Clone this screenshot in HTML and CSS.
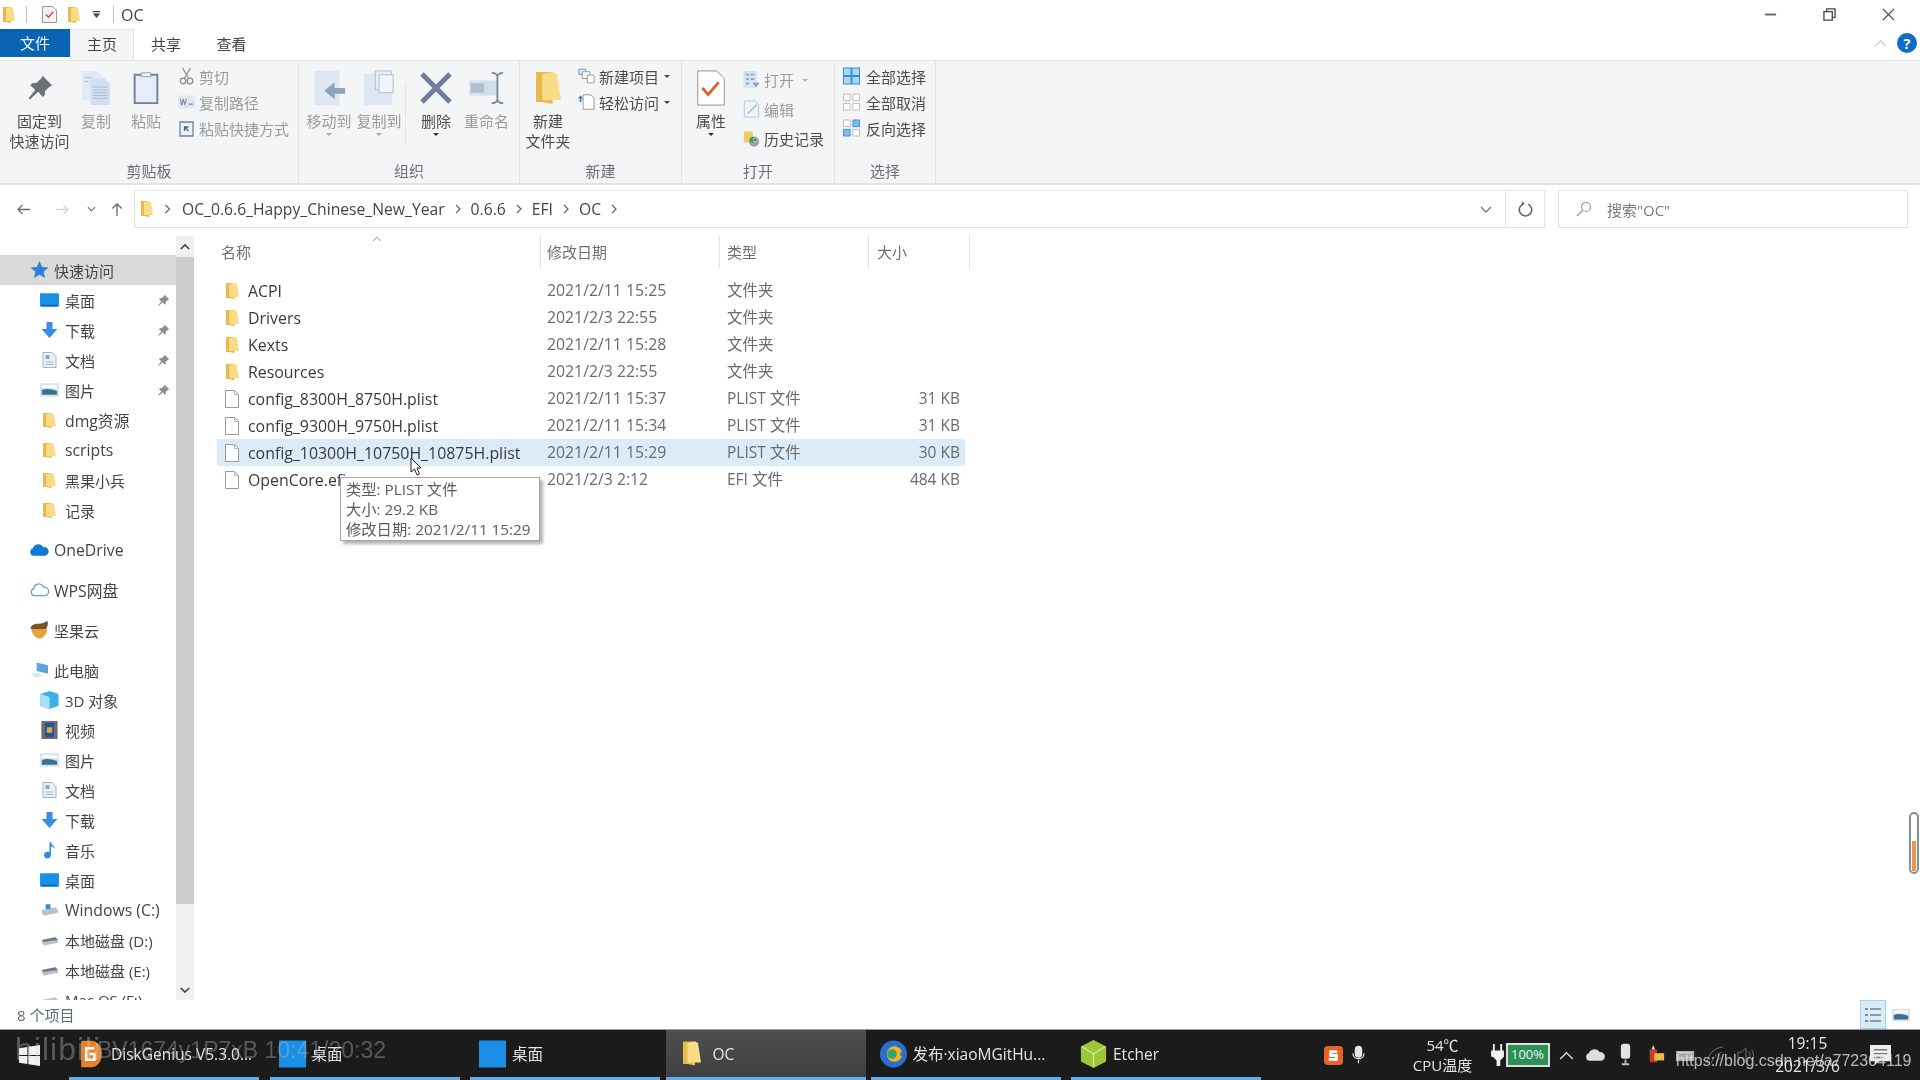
FILE: index.html
```html
<!DOCTYPE html>
<html lang="zh-CN">
<head>
<meta charset="utf-8">
<title>OC</title>
<link rel="stylesheet" href="styles.css">
</head>
<body>
<svg class="defs" width="0" height="0" aria-hidden="true">
  <symbol id="folder" viewBox="0 0 12 18" preserveAspectRatio="none"><path fill="#e9b84e" d="M0 1h8v16l-5-1H0z"/><path fill="#fbdc86" d="M3 2l5-1 2 1 2 13H3l0 3z"/></symbol>
  <symbol id="file" viewBox="0 0 16 20"><path fill="#fff" stroke="#9a9a9a" d="M1.5 1.5h9l4 4v13h-13z"/><path fill="none" stroke="#b5b5b5" d="M10.5 1.5v4h4"/></symbol>
  <symbol id="pin" viewBox="0 0 16 16"><path fill="currentColor" d="M9.5 1l5.5 5.5-1.4.6-2.6 2.4-.3 2.5-1.2 1.2-2.5-3L2.200 14.500 1.500 13.800 5.300 9 2.400 6.500l1.200-1.200 2.500-.3 2.700-2.600z"/></symbol>
  <symbol id="desk" viewBox="0 0 20 16"><rect width="20" height="14" y="1" rx="1" fill="#1a8fe8"/><rect x="2" y="13" width="16" height="1.500" fill="#0b5fa8"/></symbol>
  <symbol id="down" viewBox="0 0 18 18"><path fill="#3a8de0" d="M6 1h6v7h5l-8 9-8-9h5z"/></symbol>
  <symbol id="doc" viewBox="0 0 16 18"><path fill="#eef1f4" stroke="#a9b1bb" d="M1.500 1.500h9l4 4v11h-13z"/><path fill="#7fa7d6" d="M4 4h4v4H4z"/><path stroke="#aab4c0" d="M4 11h8M4 13.500h8"/></symbol>
  <symbol id="pic" viewBox="0 0 20 16"><rect y="1" width="20" height="14" fill="#d7e3ee"/><path fill="#3e6f8f" d="M2 8c5-2 10-1 16 1v4H2z"/><path fill="#fff" d="M2 3h16v3H2z"/></symbol>
  <symbol id="doc2" viewBox="0 0 32 38"><path fill="#e2eaf5" d="M1 1h16l7 7v24H1z"/><path fill="#d3deee" d="M10 9h15l6 6v22H10z"/><path stroke="#a9bbd2" d="M13 18h15M13 21h15M13 24h15M13 27h15M13 30h15M4 8h8M4 12h4"/></symbol>
  <symbol id="chev" viewBox="0 0 26 12"><path fill="none" stroke="#666" stroke-width="1.200" d="M11 2l4 4-4 4"/></symbol>
</svg>

<div class="page">
  <header class="titlebar">
    <svg class="ti t-f1"><use href="#folder"/></svg>
    <i class="tsep t-s1"></i>
    <svg class="ti t-chk" viewBox="0 0 16 18"><path fill="#f4f4f4" stroke="#8f8f8f" d="M.5.5h11l4 4v13H.5z"/><path fill="none" stroke="#cf4a3c" stroke-width="1.500" d="M4 9l3 3 5-6"/></svg>
    <svg class="ti t-f2"><use href="#folder"/></svg>
    <svg class="ti t-ar" viewBox="0 0 10 10"><path fill="#444" d="M1 1h8v1.500H1zM1 4h8L5 9z"/></svg>
    <i class="tsep t-s2"></i>
    <span class="t-name">OC</span>
    <div class="wctl">
      <svg viewBox="0 0 14 14"><path stroke="#666" stroke-width="2" d="M1 7h12"/></svg>
      <svg viewBox="0 0 14 14"><path fill="none" stroke="#444" stroke-width="1.400" d="M1 4h9v9H1zM4 4V1h9v9h-3"/></svg>
      <svg viewBox="0 0 14 14"><path stroke="#444" stroke-width="1.300" d="M1 1l12 12M13 1L1 13"/></svg>
    </div>
  </header>

  <nav class="tabs">
    <span class="tab tab-file">文件</span>
    <span class="tab tab-on">主页</span>
    <span class="tab">共享</span>
    <span class="tab">查看</span>
    <div class="tabs-right">
      <svg class="caret" viewBox="0 0 14 8"><path fill="none" stroke="#c4c4c4" stroke-width="1.300" d="M1 7l6-6 6 6"/></svg>
      <span class="help">?</span>
    </div>
  </nav>

  <section class="ribbon">
    <div class="group g-clip">
      <div class="gbody">
        <div class="big w-pin dark"><svg class="bi" viewBox="0 0 36 36"><use href="#pin" width="28" height="28" x="4" y="4" color="#6d7279"/></svg><span>固定到<br>快速访问</span></div>
        <div class="big w-copy off"><svg class="bi" viewBox="0 0 32 38"><use href="#doc2"/></svg><span>复制</span></div>
        <div class="big w-paste off"><svg class="bi" viewBox="0 0 30 38"><path fill="#e6edf6" stroke="#6f8299" stroke-width="2" d="M3 5h24v30H3z"/><path fill="#f6f8fb" stroke="#8a9aae" d="M10 3h10v4H10z"/></svg><span>粘贴</span></div>
        <div class="scol s-clip off">
          <div class="srow"><svg viewBox="0 0 16 18"><path fill="none" stroke="#8f8f8f" stroke-width="1.300" d="M4 1l6 10M12 1L6 11"/><circle cx="4.500" cy="14" r="2.800" fill="none" stroke="#8f8f8f" stroke-width="1.300"/><circle cx="11.500" cy="14" r="2.800" fill="none" stroke="#8f8f8f" stroke-width="1.300"/></svg><span>剪切</span></div>
          <div class="srow"><svg viewBox="0 0 16 14"><rect y="1" width="16" height="12" fill="#e0e7f0"/><path fill="none" stroke="#7a8ca3" d="M2 4l1.500 6L5 4l1.500 6L8 4M10 9h4"/></svg><span>复制路径</span></div>
          <div class="srow"><svg viewBox="0 0 16 18"><path fill="#eef2f8" stroke="#6f8299" stroke-width="1.300" d="M1.500 3h13v14h-13z"/><path fill="none" stroke="#3d5f8c" stroke-width="1.300" d="M6 12V8h4M6 8l4 4"/></svg><span>粘贴快捷方式</span></div>
        </div>
      </div>
      <div class="glabel">剪贴板</div>
    </div>

    <div class="group g-org">
      <div class="gbody">
        <div class="big w-move off"><svg class="bi" viewBox="0 0 34 38"><path fill="#dfe7f2" d="M2 1h26v36H2z"/><path fill="#8ea3bd" d="M34 19H23v-6L12 22l11 9v-6h11z"/></svg><span>移动到</span><i class="mini"></i></div>
        <div class="big w-move off"><svg class="bi" viewBox="0 0 34 38"><path fill="#dfe7f2" d="M1 4h30v33H1z"/><path fill="#e8eef6" stroke="#a9bbd2" d="M13 1h17v20H13z"/><path fill="#f2f5fa" stroke="#a9bbd2" d="M17 5h15v19H17z"/></svg><span>复制到</span><i class="mini"></i></div>
        <i class="vsep"></i>
        <div class="big w-del dark"><svg class="bi" viewBox="0 0 36 36"><path stroke="#6e7f9f" stroke-width="5" d="M4 4l28 28M32 4L4 32"/></svg><span>删除</span><i class="mini mini-d"></i></div>
        <div class="big w-ren off"><svg class="bi" viewBox="0 0 38 36"><rect x="0" y="10" width="30" height="16" fill="#d4dfed"/><rect x="2" y="13" width="14" height="10" fill="#aebfd4"/><path fill="none" stroke="#7c8796" stroke-width="2" d="M24 2c3 0 5 1 6 3 1-2 3-3 6-3M30 5v26M24 34c3 0 5-1 6-3 1 2 3 3 6 3"/></svg><span>重命名</span></div>
      </div>
      <div class="glabel">组织</div>
    </div>

    <div class="group g-new">
      <div class="gbody">
        <div class="big w-newf dark"><svg class="bi folder-b"><use href="#folder"/></svg><span>新建<br>文件夹</span></div>
        <div class="scol s-new dark">
          <div class="srow"><svg viewBox="0 0 20 18"><path fill="#e6f0fa" stroke="#4a88c8" d="M1 1h8v6H1z"/><path fill="#fff" stroke="#8c8c8c" d="M5 4h9v8H5z"/><path fill="#fff" stroke="#8c8c8c" d="M11 8h8v9h-8z"/></svg><span>新建项目</span><b class="tri"></b></div>
          <div class="srow"><svg viewBox="0 0 20 20"><path fill="#fff" stroke="#8c8c8c" d="M6 1.500h9l4 4v13H6z"/><path fill="#3f7fc0" d="M0 6l3-4 3 4H4v4H2V6z"/></svg><span>轻松访问</span><b class="tri"></b></div>
        </div>
      </div>
      <div class="glabel">新建</div>
    </div>

    <div class="group g-open">
      <div class="gbody">
        <div class="big w-prop dark"><svg class="bi" viewBox="0 0 30 38"><path fill="#fff" stroke="#8f8f8f" d="M1 1h20l8 8v28H1z"/><path fill="none" stroke="#d9622b" stroke-width="3" d="M6 19l6 7 11-13"/></svg><span>属性</span><i class="mini mini-d"></i></div>
        <div class="scol s-open">
          <div class="srow off"><svg viewBox="0 0 18 20"><rect width="15" height="19" fill="#d9e3ef"/><path stroke="#8ca0b8" stroke-width="2" d="M3 4h3M3 9h3M3 14h3M8 4h4M8 9h4"/><path fill="#8ca0b8" d="M10 13h8l-4 5z"/></svg><span>打开</span><b class="tri tri-l"></b></div>
          <div class="srow off"><svg viewBox="0 0 18 20"><path fill="#eef3f9" stroke="#b4c4d8" d="M1 1h12l4 4v14H1z"/><path stroke="#a6b8cf" stroke-width="1.500" d="M5 15L15 5"/></svg><span>编辑</span></div>
          <div class="srow dark"><svg viewBox="0 0 20 20"><path fill="#f3cb63" d="M1 1h8l3 2v11H1z"/><circle cx="13" cy="13" r="6" fill="#9aa3ad"/><circle cx="11" cy="11" r="3.500" fill="#3fa55a"/><path stroke="#fff" d="M13 9v4h3"/></svg><span>历史记录</span></div>
        </div>
      </div>
      <div class="glabel">打开</div>
    </div>

    <div class="group g-sel">
      <div class="gbody">
        <div class="scol s-sel dark">
          <div class="srow"><svg viewBox="0 0 18 18"><rect width="18" height="18" fill="#2f8fd8"/><path fill="#a9d6f5" d="M1 1h7v7H1zM10 1h7v7h-7zM1 10h7v7H1zM10 10h7v7h-7z"/></svg><span>全部选择</span></div>
          <div class="srow"><svg viewBox="0 0 18 18"><path fill="#fff" stroke="#b9b9b9" d="M.5.5h7v7h-7zM10.500.5h7v7h-7zM.5 10.500h7v7h-7zM10.500 10.500h7v7h-7z"/></svg><span>全部取消</span></div>
          <div class="srow"><svg viewBox="0 0 18 18"><path fill="#fff" stroke="#b9b9b9" d="M.5.5h7v7h-7zM10.500 10.500h7v7h-7z"/><path fill="#7fbce8" stroke="#2f8fd8" d="M10.500.5h7v7h-7zM.5 10.500h7v7h-7z"/></svg><span>反向选择</span></div>
        </div>
      </div>
      <div class="glabel">选择</div>
    </div>
  </section>

  <section class="addr">
    <div class="navbtns">
      <svg class="n-back" viewBox="0 0 16 12"><path fill="none" stroke="#6a6a6a" stroke-width="1.400" d="M15 6H2M7 1L2 6l5 5"/></svg>
      <svg class="n-fwd" viewBox="0 0 16 12"><path fill="none" stroke="#d0d0d0" stroke-width="1.400" d="M1 6h13M9 1l5 5-5 5"/></svg>
      <svg class="n-dd" viewBox="0 0 10 6"><path fill="none" stroke="#777" stroke-width="1.300" d="M1 1l4 4 4-4"/></svg>
      <svg class="n-up" viewBox="0 0 12 16"><path fill="none" stroke="#666" stroke-width="1.400" d="M6 15V2M1 7l5-5 5 5"/></svg>
    </div>
    <div class="crumbs">
      <svg class="c-folder"><use href="#folder"/></svg>
      <svg class="gt gt-1"><use href="#chev"/></svg>
      <span>OC_0.6.6_Happy_Chinese_New_Year</span><svg class="gt"><use href="#chev"/></svg>
      <span>0.6.6</span><svg class="gt"><use href="#chev"/></svg>
      <span>EFI</span><svg class="gt"><use href="#chev"/></svg>
      <span>OC</span><svg class="gt"><use href="#chev"/></svg>
      <svg class="c-dd" viewBox="0 0 12 7"><path fill="none" stroke="#777" stroke-width="1.300" d="M1 1l5 5 5-5"/></svg>
      <div class="c-ref"><svg viewBox="0 0 16 18"><path fill="none" stroke="#666" stroke-width="1.800" d="M5 3.500a7 7 0 1 0 6 0"/><path fill="#666" d="M4 0v6l3-3z"/></svg></div>
    </div>
    <div class="search">
      <svg viewBox="0 0 16 16"><circle cx="10" cy="6" r="4.500" fill="none" stroke="#9a9a9a" stroke-width="1.200"/><path stroke="#9a9a9a" stroke-width="1.200" d="M6.500 9.500L1 15"/></svg>
      <span>搜索"OC"</span>
    </div>
  </section>

  <main class="main">
    <aside class="nav">
      <div class="nrow l1 sel"><svg viewBox="0 0 16 16"><path fill="#2a82dc" d="M8 0l2.300 5.300 5.700.5-4.300 3.700 1.300 5.600L8 12.200l-5 2.900 1.300-5.600L0 5.800l5.700-.5z"/></svg><span>快速访问</span></div>
      <div class="nrow l2"><svg><use href="#desk"/></svg><span>桌面</span><svg class="p"><use href="#pin"/></svg></div>
      <div class="nrow l2"><svg><use href="#down"/></svg><span>下载</span><svg class="p"><use href="#pin"/></svg></div>
      <div class="nrow l2"><svg><use href="#doc"/></svg><span>文档</span><svg class="p"><use href="#pin"/></svg></div>
      <div class="nrow l2"><svg><use href="#pic"/></svg><span>图片</span><svg class="p"><use href="#pin"/></svg></div>
      <div class="nrow l2 f lat"><svg><use href="#folder"/></svg><span>dmg资源</span></div>
      <div class="nrow l2 f lat"><svg><use href="#folder"/></svg><span>scripts</span></div>
      <div class="nrow l2 f"><svg><use href="#folder"/></svg><span>黑果小兵</span></div>
      <div class="nrow l2 f"><svg><use href="#folder"/></svg><span>记录</span></div>
      <div class="nrow l1 gap lat"><svg viewBox="0 0 20 14"><path fill="#0f78d4" d="M4 13a4 4 0 0 1-1-7.800A6 6 0 0 1 14 4a4.500 4.500 0 0 1 2 9z"/></svg><span>OneDrive</span></div>
      <div class="nrow l1 gap lat"><svg viewBox="0 0 20 16"><path fill="#fff" stroke="#5b9ae0" stroke-width="1.300" d="M5 14a3.800 3.800 0 0 1-1-7.400A5.500 5.500 0 0 1 14.500 5 4.500 4.500 0 0 1 15.500 14z"/></svg><span>WPS网盘</span></div>
      <div class="nrow l1 gap"><svg viewBox="0 0 20 20"><path fill="#e8a13f" d="M1 8h17c1 6-4 11.500-8 11.500S1 14 1 8z"/><path fill="#7a5228" d="M0 9c0-4 4-6 9-6 4 0 8-2 10-3 1 5-1 9-3 9z"/></svg><span>坚果云</span></div>
      <div class="nrow l1 gap"><svg viewBox="0 0 20 18"><path fill="#5aa6e0" d="M7 1l12 3v9L7 10z"/><path fill="#dfe5ea" d="M1 13l8-1 5 3-8 2z"/></svg><span>此电脑</span></div>
      <div class="nrow l2"><svg viewBox="0 0 18 18"><path fill="#3ab4e6" d="M9 0l9 3v12l-9 3-9-3V3z"/><path fill="#a8e2f7" d="M0 3l9 3v12l-9-3z"/></svg><span>3D 对象</span></div>
      <div class="nrow l2"><svg viewBox="0 0 18 20"><rect width="18" height="20" fill="#6b7078"/><rect x="4" y="2" width="10" height="16" fill="#2e4f8f"/><path fill="#d8b04a" d="M6 7h6v6H6z"/></svg><span>视频</span></div>
      <div class="nrow l2"><svg><use href="#pic"/></svg><span>图片</span></div>
      <div class="nrow l2"><svg><use href="#doc"/></svg><span>文档</span></div>
      <div class="nrow l2"><svg><use href="#down"/></svg><span>下载</span></div>
      <div class="nrow l2"><svg viewBox="0 0 14 18"><path fill="#2a8fe0" d="M7 1h1.500c0 3 4 4 4 7-1-1.500-2.500-2.500-4-2.500V14a3.500 3.500 0 1 1-1.500-2.800z"/></svg><span>音乐</span></div>
      <div class="nrow l2"><svg><use href="#desk"/></svg><span>桌面</span></div>
      <div class="nrow l2 lat"><svg viewBox="0 0 20 16"><path fill="#b9c3cc" d="M2 8l14-3 3 3v3l-15 3-2-3z"/><path fill="#2e8ad8" d="M6 2h5v5H6z"/></svg><span>Windows (C:)</span></div>
      <div class="nrow l2"><svg viewBox="0 0 20 16"><path fill="#b9c3cc" d="M2 8l14-3 3 3v3l-15 3-2-3z"/><path fill="#6f7a84" d="M2 8l14-3 3 3-15 2z"/></svg><span>本地磁盘 (D:)</span></div>
      <div class="nrow l2"><svg viewBox="0 0 20 16"><path fill="#b9c3cc" d="M2 8l14-3 3 3v3l-15 3-2-3z"/><path fill="#6f7a84" d="M2 8l14-3 3 3-15 2z"/></svg><span>本地磁盘 (E:)</span></div>
      <div class="nrow l2"><svg viewBox="0 0 20 16"><path fill="#b9c3cc" d="M2 8l14-3 3 3v3l-15 3-2-3z"/></svg><span>Mac OS (F:)</span></div>
    </aside>

    <div class="sbar">
      <svg class="sb-up" viewBox="0 0 12 8"><path fill="none" stroke="#444" stroke-width="2" d="M1 7l5-5 5 5"/></svg>
      <i class="sb-thumb"></i>
      <svg class="sb-dn" viewBox="0 0 12 8"><path fill="none" stroke="#444" stroke-width="2" d="M1 1l5 5 5-5"/></svg>
    </div>

    <div class="files">
      <div class="fhead">
        <div class="hc">名称<svg class="sort" viewBox="0 0 10 6"><path fill="none" stroke="#a0a0a0" d="M1 5l4-4 4 4"/></svg></div>
        <div class="hc">修改日期</div>
        <div class="hc">类型</div>
        <div class="hc">大小</div>
      </div>
      <div class="frow"><div class="nm"><svg class="ff"><use href="#folder"/></svg>ACPI</div><div class="dt">2021/2/11 15:25</div><div>文件夹</div><div></div></div>
      <div class="frow"><div class="nm"><svg class="ff"><use href="#folder"/></svg>Drivers</div><div class="dt">2021/2/3 22:55</div><div>文件夹</div><div></div></div>
      <div class="frow"><div class="nm"><svg class="ff"><use href="#folder"/></svg>Kexts</div><div class="dt">2021/2/11 15:28</div><div>文件夹</div><div></div></div>
      <div class="frow"><div class="nm"><svg class="ff"><use href="#folder"/></svg>Resources</div><div class="dt">2021/2/3 22:55</div><div>文件夹</div><div></div></div>
      <div class="frow"><div class="nm"><svg class="fd"><use href="#file"/></svg>config_8300H_8750H.plist</div><div class="dt">2021/2/11 15:37</div><div>PLIST 文件</div><div class="sz">31 KB</div></div>
      <div class="frow"><div class="nm"><svg class="fd"><use href="#file"/></svg>config_9300H_9750H.plist</div><div class="dt">2021/2/11 15:34</div><div>PLIST 文件</div><div class="sz">31 KB</div></div>
      <div class="frow hot"><div class="nm"><svg class="fd"><use href="#file"/></svg>config_10300H_10750H_10875H.plist</div><div class="dt">2021/2/11 15:29</div><div>PLIST 文件</div><div class="sz">30 KB</div></div>
      <div class="frow"><div class="nm"><svg class="fd"><use href="#file"/></svg>OpenCore.efi</div><div class="dt">2021/2/3 2:12</div><div>EFI 文件</div><div class="sz">484 KB</div></div>
    </div>
  </main>

  <footer class="status">
    <span>8 个项目</span>
    <div class="views">
      <div class="v-on"><svg viewBox="0 0 18 18"><path stroke="#7d8791" stroke-width="2" d="M1 3h3M1 9h3M1 15h3"/><path stroke="#8d99a5" stroke-width="2" d="M6 3h11M6 9h11M6 15h11"/></svg></div>
      <svg class="v-pic"><use href="#pic"/></svg>
    </div>
  </footer>

  <div class="taskbar">
    <div class="start"><svg viewBox="0 0 20 20"><path fill="#f2f2f2" d="M0 3l8-1.200V9.500H0zM9 1.600L20 0v9.500H9zM0 10.500h8v7.700L0 17zM9 10.500h11V20L9 18.400z"/></svg></div>
    <div class="task"><svg viewBox="0 0 27 34"><path fill="#e8812a" d="M1 1h12c8 0 13 7 13 16s-5 16-13 16H1z"/><path fill="none" stroke="#fff" stroke-width="3" d="M17 10H7v14h10v-7h-6"/></svg><span>DiskGenius V5.3.0...</span></div>
    <div class="task"><svg viewBox="0 0 27 27"><rect width="27" height="27" fill="#1a8fe8"/></svg><span>桌面</span></div>
    <div class="task"><svg viewBox="0 0 27 27"><rect width="27" height="27" fill="#1a8fe8"/></svg><span>桌面</span></div>
    <div class="task on"><svg class="tf"><use href="#folder"/></svg><span>OC</span></div>
    <div class="task"><svg viewBox="0 0 28 28"><circle cx="14" cy="14" r="14" fill="#2a6fd0"/><circle cx="15" cy="14" r="8" fill="#f5b51e"/><circle cx="12.500" cy="14" r="5" fill="#35a46a"/><path fill="#2a6fd0" d="M28 14l-7-2v4z"/></svg><span>发布·xiaoMGitHu...</span></div>
    <div class="task"><svg viewBox="0 0 27 30"><path fill="#9cc73a" d="M13.500 0L27 7v16l-13.500 7L0 23V7z"/><path fill="none" stroke="#d5e88a" stroke-width="1.500" d="M1 7l12.500 8L26 7M13.500 15v14"/></svg><span>Etcher</span></div>
    <div class="tray">
      <svg class="y-s" viewBox="0 0 20 20"><rect width="20" height="20" rx="4" fill="#e8622a"/><path fill="none" stroke="#fff" stroke-width="3" d="M14 6H7v4h6v4H5"/></svg>
      <svg class="y-mic" viewBox="0 0 14 20"><rect x="3" width="8" height="13" rx="4" fill="#e6e6e6"/><path fill="none" stroke="#e6e6e6" stroke-width="1.300" d="M1 8c0 8 12 8 12 0M7 15v4"/></svg>
      <i></i>
      <div class="temp"><span>54℃</span><span>CPU温度</span></div>
      <i></i>
      <svg class="y-plug" viewBox="0 0 14 24"><path fill="#f2f2f2" d="M2 0h2v7h6V0h2v7h2v7l-4 4v6H6v-6l-4-4H0V7h2z"/></svg>
      <div class="batt"><span>100%</span></div>
      <svg class="y-car" viewBox="0 0 16 10"><path fill="none" stroke="#ddd" stroke-width="1.500" d="M1 9l7-7 7 7"/></svg>
      <svg class="y-cl" viewBox="0 0 22 14"><path fill="#dedede" d="M5 13a4 4 0 0 1-1-7.800A6.500 6.500 0 0 1 15.500 4 4.500 4.500 0 0 1 17 13z"/></svg>
      <svg class="y-m2" viewBox="0 0 14 24"><rect x="2" width="10" height="16" rx="3" fill="#e2e2e2"/><path stroke="#bbb" stroke-width="2" d="M7 17v4M3 22h8"/></svg>
      <svg class="y-qq" viewBox="0 0 20 24"><path fill="#c73a2a" d="M3 6h8v14H3z"/><path fill="#f0b848" d="M8 10h11v8H8z"/><path fill="#d8d8d8" d="M7 1l2 5h-4z"/></svg>
      <svg class="y-net" viewBox="0 0 22 16"><rect y="3" width="20" height="11" fill="#aaa"/><path stroke="#eee" d="M2 5h16"/></svg>
      <svg class="y-wifi" viewBox="0 0 22 20"><path fill="none" stroke="#777" d="M1 19C2 9 9 2 19 1M6 19c1-6 5-10 11-12M11 19c1-3 3-5 6-6"/></svg>
      <svg class="y-sp" viewBox="0 0 22 20"><path fill="none" stroke="#777" d="M2 7h4l5-5v16l-5-5H2zM14 6c2 2 2 6 0 8M17 4c3 3 3 9 0 12"/></svg>
      <div class="clock"><span>19:15</span><span>2021/3/6</span></div>
      <i></i>
      <svg class="y-note" viewBox="0 0 22 22"><path fill="#eee" d="M0 0h22v17H9l-4 4v-4H0z"/><path stroke="#777" stroke-width="1.500" d="M4 5h14M4 9h14M4 13h10"/></svg>
    </div>
  </div>

  <!-- overlays -->
  <div class="tooltip"><div>类型: PLIST 文件</div><div>大小: 29.2 KB</div><div>修改日期: 2021/2/11 15:29</div></div>
  <svg class="cursor" viewBox="0 0 12 19"><path fill="#fff" stroke="#222" d="M1 1v14l3.500-3 2.500 6 2.500-1-2.500-6H11z"/></svg>
  <div class="thermo"><i></i></div>
  <div class="wm-logo">bilibili</div>
  <div class="wm-bv">BV1674y1P7xB 10:41/20:32</div>
  <div class="wm-url">https://blog.csdn.net/a772304119</div>
</div>
</body>
</html>
```

FILE: styles.css
```css
* { box-sizing: border-box; }
html, body { margin: 0; padding: 0; }
body { width: 1920px; height: 1080px; overflow: hidden; background: #fff; }
.defs { position: absolute; }
i { font-style: normal; }
b { font-weight: normal; }

.page {
  position: relative;
  width: 1920px;
  height: 1080px;
  display: flex;
  flex-direction: column;
  overflow: hidden;
  font-family: "Open Sans", "Noto Sans CJK SC", sans-serif;
  font-size: 15px;
  color: #444;
  filter: blur(0.55px);
}

/* title bar */
.titlebar { height: 29px; display: flex; align-items: center; flex: none; }
.ti { display: block; flex: none; }
.t-f1 { width: 12px; height: 18px; margin-left: 3px; }
.tsep { display: block; width: 1px; height: 17px; background: #bdbdbd; flex: none; }
.t-s1 { margin-left: 11px; }
.t-chk { width: 15px; height: 17px; margin-left: 15px; }
.t-f2 { width: 12px; height: 18px; margin-left: 11px; }
.t-ar { width: 9px; height: 9px; margin-left: 12px; }
.t-s2 { margin-left: 12px; }
.t-name { margin-left: 7px; font-size: 16px; color: #444; }
.wctl { margin-left: auto; display: flex; gap: 46px; padding-right: 25px; }
.wctl svg { width: 13px; height: 13px; display: block; }

/* tabs */
.tabs { height: 31px; display: flex; flex: none; position: relative; }
.tab { width: 64px; height: 31px; line-height: 30px; text-align: center; color: #444; margin-right: 1.500px; }
.tab-file { width: 70px; height: 28px; line-height: 29px; background: #0a62b2; color: #f2f6fa; margin-right: 0; }
.tab-on { background: #f4f5f6; border: 1px solid #e4e5e6; border-bottom: 0; line-height: 29px; margin-right: 0; }
.tabs-right { margin-left: auto; display: flex; align-items: center; padding: 0 3px 3px 0; gap: 10px; }
.caret { width: 13px; height: 7px; }
.help { width: 20px; height: 20px; border-radius: 50%; background: #0f6cc4; color: #fff; text-align: center; line-height: 20px; font-size: 15px; font-weight: 700; }

/* ribbon */
.ribbon { height: 125px; flex: none; display: flex; background: #f4f5f6; border-top: 1px solid #e3e4e5; border-bottom: 2px solid #e1e2e3; }
.group { display: flex; flex-direction: column; border-right: 1px solid #e4e5e6; padding-top: 9px; }
.g-clip { width: 299px; }
.g-org { width: 221px; }
.g-new { width: 162px; }
.g-open { width: 153px; }
.g-sel { width: 101px; }
.g-org .gbody { padding-left: 5px; }
.g-sel .gbody { padding-left: 8px; }
.gbody { flex: 1; display: flex; min-height: 0; }
.glabel { height: 23px; line-height: 22px; text-align: center; color: #6b6f73; font-size: 15px; }
.big { display: flex; flex-direction: column; align-items: center; text-align: center; line-height: 20px; flex: none; }
.big span { display: block; margin-top: 5px; white-space: nowrap; }
.bi { width: 36px; height: 36px; display: block; flex: none; }
.folder-b { width: 25px; }
.dark { color: #4c4c4c; }
.off { color: #9b9b9b; }
.w-pin { width: 71px; margin-left: 4px; }
.w-copy { width: 42px; }
.w-paste { width: 58px; }
.w-move { width: 50px; }
.w-del { width: 56px; margin-left: 2px; }
.w-ren { width: 45px; }
.w-newf { width: 56px; }
.w-prop { width: 58px; }
.vsep { display: block; width: 1px; height: 60px; margin: 14px 0 0 1px; background: #e4e5e6; flex: none; }
.mini { display: block; width: 0; height: 0; border: 3px solid transparent; border-top-color: #aaa; margin-top: 2px; }
.mini-d { border-top-color: #333; }
.scol { display: flex; flex-direction: column; }
.srow { height: 26px; display: flex; align-items: center; white-space: nowrap; }
.srow svg { width: 17px; height: 18px; flex: none; margin-right: 4px; }
.s-clip { margin-left: 3px; margin-top: -7px; }
.s-new { margin-left: 2px; margin-top: -7px; }
.s-open { margin-left: 3px; margin-top: -5px; }
.s-open .srow { height: 29.500px; }
.s-sel { margin-top: -7px; }
.s-sel .srow svg { margin-right: 6px; }
.tri { display: block; width: 0; height: 0; border: 3.500px solid transparent; border-top-color: #444; margin: 4px 0 0 5px; }
.tri-l { border-top-color: #b5b5b5; margin-left: 8px; }

/* address */
.addr { height: 38px; margin-top: 5px; flex: none; display: flex; }
.navbtns { width: 134px; display: flex; align-items: center; flex: none; }
.navbtns svg { display: block; flex: none; }
.n-back { width: 15px; height: 11px; margin-left: 16px; }
.n-fwd { width: 15px; height: 11px; margin-left: 24px; opacity: .9; }
.n-dd { width: 9px; height: 6px; margin-left: 17px; }
.n-up { width: 12px; height: 15px; margin-left: 15px; }
.crumbs { width: 1411px; flex: none; display: flex; align-items: center; border: 1px solid #e2e2e2; padding-left: 6px; color: #444; font-size: 15.700px; }
.c-folder { width: 12px; height: 18px; flex: none; }
.gt { width: 26px; height: 12px; flex: none; }
.gt-1 { width: 29px; }
.c-dd { width: 12px; height: 7px; margin-left: auto; margin-right: 13px; }
.c-ref { width: 39px; height: 36px; border-left: 1px solid #e2e2e2; display: flex; align-items: center; justify-content: center; }
.c-ref svg { width: 15px; height: 16px; }
.search { width: 350px; margin-left: 13px; flex: none; border: 1px solid #e2e2e2; display: flex; align-items: center; padding-left: 17px; color: #7a7a7a; }
.search svg { width: 16px; height: 16px; margin-right: 15px; }

/* main */
.main { flex: 1; min-height: 0; display: flex; }
.nav { width: 176px; flex: none; padding-top: 27px; overflow: hidden; }
.nrow { height: 30px; display: flex; align-items: center; white-space: nowrap; position: relative; color: #444; }
.nrow > svg:first-child { width: 19px; height: 18px; margin-right: 6px; flex: none; display: block; }
.l1 { padding-left: 30px; }
.l1 > svg:first-child { margin-right: 5px !important; }
.l2 { padding-left: 40px; }
.lat { font-size: 15.800px; }
.gap { margin-top: 10px; }
.gap + .l2 { margin-top: 0; }
.sel { background: #d9d9d9; }
.f > svg:first-child { width: 13px; height: 17px; margin-left: 3px; margin-right: 9px; }
.p { width: 13px; height: 13px; margin-left: auto; margin-right: 6px; color: #8e8e8e; flex: none; }
.sbar { width: 18px; flex: none; margin-top: 8px; background: #f0f0f0; display: flex; flex-direction: column; align-items: center; }
.sb-up { width: 10px; height: 7px; margin-top: 7px; flex: none; }
.sb-thumb { display: block; width: 100%; height: 647px; margin-top: 7px; background: #cdcdcd; flex: none; }
.sb-dn { width: 10px; height: 7px; margin-top: auto; margin-bottom: 6px; flex: none; }
.files { flex: 1; padding: 7px 0 0 23px; }
.fhead { display: grid; grid-template-columns: 324px 179px 149px 101px; height: 33px; margin-bottom: 9px; color: #6a6f75; }
.hc { border-right: 1px solid #e6e6e6; padding-left: 6px; line-height: 34px; position: relative; }
.hc:first-child { padding-left: 4px; }
.hc:nth-child(3) { padding-left: 7px; }
.hc:nth-child(4) { padding-left: 8px; }
.sort { position: absolute; left: 155px; top: 1px; width: 10px; height: 6px; }
.frow { display: grid; grid-template-columns: 324px 181px 149px 94px; width: 748px; height: 27px; line-height: 26px; color: #6b6b6b; white-space: nowrap; font-size: 15.500px; }
.frow > div { padding-left: 6px; }
.frow > .dt { font-size: 15.800px; }
.frow > div:nth-child(3) { padding-left: 5px; }
.frow > .nm { padding-left: 8px; color: #3a3a3a; display: flex; align-items: center; font-size: 15.900px; }
.frow > .sz { padding: 0 5px 0 0; text-align: right; }
.hot { background: #dcebf8; }
.ff { width: 13px; height: 18px; margin: 0 9px 0 1px; flex: none; }
.fd { width: 16px; height: 20px; flex: none; margin-right: 8px; margin-left: -1px; }

/* status */
.status { height: 29px; flex: none; display: flex; align-items: center; padding-left: 17px; color: #5f6b78; }
.views { margin-left: auto; display: flex; align-items: center; height: 29px; padding-right: 10px; }
.v-on { width: 26px; height: 29px; background: #d7ebf8; border: 1px solid #a8d1ec; display: flex; align-items: center; justify-content: center; }
.v-on svg { width: 18px; height: 18px; }
.v-pic { width: 18px; height: 16px; margin-left: 6px; }

/* taskbar */
.taskbar { height: 51px; flex: none; background: #1b1b1b; border-top: 1px solid #9b9b9b; display: flex; position: relative; color: #e6e6e6; }
.start { width: 69px; flex: none; display: flex; align-items: center; padding-left: 19px; }
.start svg { width: 21px; height: 21px; }
.task { width: 190px; margin-right: 10.500px; flex: none; display: flex; align-items: center; padding-left: 9px; border-bottom: 3px solid #64ace6; font-size: 15.500px; white-space: nowrap; position: relative; z-index: 1; }
.task svg { width: 27px; height: 28px; margin-right: 6px; flex: none; }
.task .tf { width: 18px; height: 27px; margin: 0 12px 0 8px; }
.task:nth-child(5) { margin-left: -5px; margin-right: 5px; width: 200px; padding-left: 9px; background: linear-gradient(#4e4e4e, #404040); border-bottom-color: #64ace6; }
.tray { position: absolute; left: 1320px; top: 0; height: 50px; display: grid; grid-template-columns: 26px 24px 35px 75px 8px 18px 46px 28px 31px 29px 32px 28px 32px 28px 95px 10px 30px; align-items: center; justify-items: center; }
.y-s { width: 19px; height: 19px; }
.y-mic { width: 13px; height: 20px; }
.temp { display: flex; flex-direction: column; align-items: center; line-height: 20px; font-size: 15px; white-space: nowrap; margin-top: -1px; }
.clock { display: flex; flex-direction: column; align-items: center; line-height: 23px; font-size: 15.500px; white-space: nowrap; }
.y-plug { width: 13px; height: 22px; }
.batt { width: 44px; height: 24px; border: 2px solid #ddd; background: #2c8f57; text-align: center; line-height: 19px; font-size: 13px; color: #e8f5ec; position: relative; margin-left: -3px; }
.y-car { width: 15px; height: 9px; }
.y-cl { width: 21px; height: 14px; }
.y-m2 { width: 13px; height: 24px; }
.y-qq { width: 18px; height: 24px; }
.y-net { width: 20px; height: 15px; }
.y-wifi { width: 20px; height: 18px; }
.y-sp { width: 20px; height: 18px; }
.y-note { width: 21px; height: 21px; }

/* overlays */
.tooltip { position: absolute; left: 340px; top: 477px; width: 200px; height: 64px; background: #fff; border: 1px solid #a8a8a8; box-shadow: 3px 3px 3px rgba(0,0,0,.3); padding: 1px 0 0 5px; line-height: 20px; color: #5c5c5c; font-size: 15.300px; z-index: 3; white-space: nowrap; }
.cursor { position: absolute; left: 410px; top: 457px; width: 12px; height: 19px; z-index: 4; }
.thermo { position: absolute; left: 1909px; top: 812px; width: 10px; height: 62px; border: 2px solid #8f8f8f; border-radius: 5px; background: #fff; display: flex; align-items: flex-end; padding: 1px; }
.thermo i { display: block; width: 100%; height: 30px; background: #e8954f; }
.wm-logo { position: absolute; left: 15px; top: 1031px; font: 32px "Liberation Sans", sans-serif; letter-spacing: 1px; color: rgba(220,220,220,.32); z-index: 2; }
.wm-bv { position: absolute; left: 97px; top: 1037px; font: 23px "Liberation Sans", sans-serif; color: rgba(190,190,190,.38); z-index: 2; white-space: nowrap; }
.wm-url { position: absolute; left: 1676px; top: 1052px; font: 16px "Liberation Sans", sans-serif; color: rgba(235,235,235,.75); z-index: 2; white-space: nowrap; }
```
